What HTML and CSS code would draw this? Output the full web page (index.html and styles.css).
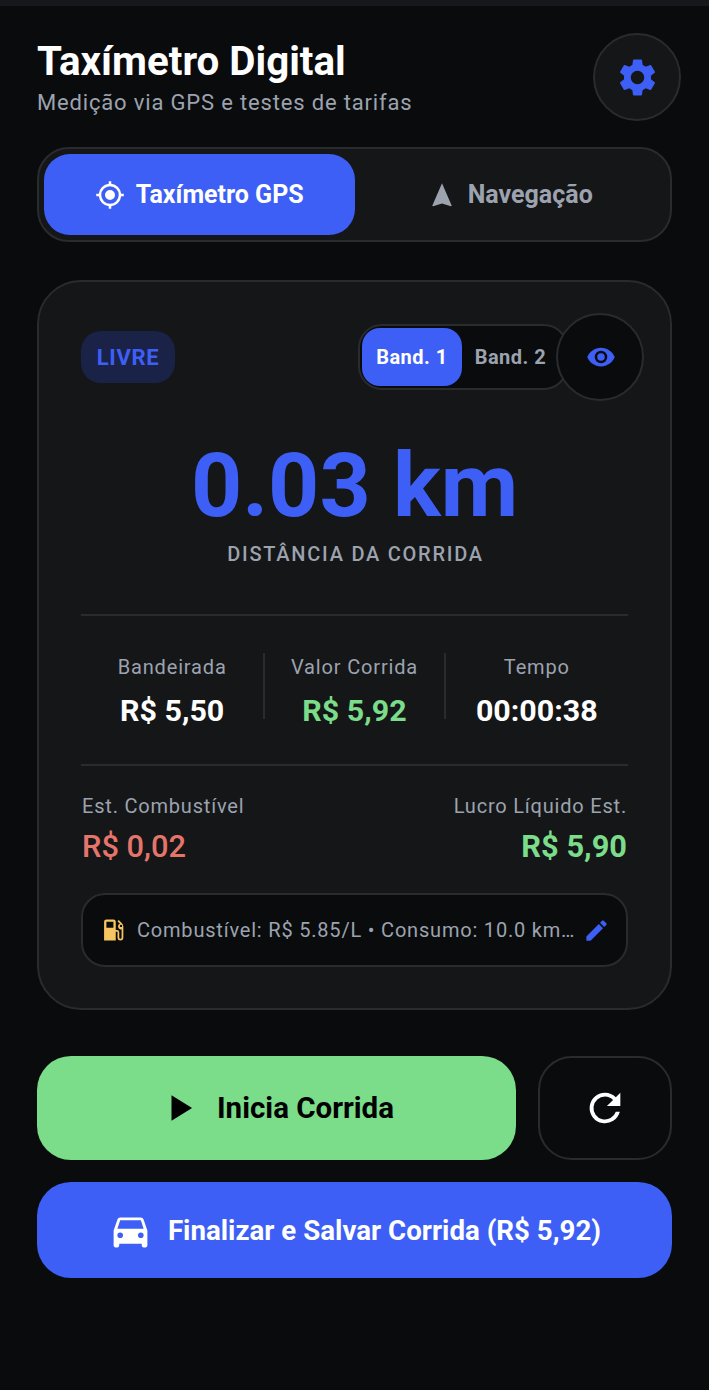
FILE: index.html
```html
<!DOCTYPE html>
<html lang="pt-BR">
<head>
<meta charset="utf-8">
<title>Taxímetro Digital</title>
<link rel="stylesheet" href="styles.css">
</head>
<body>
<div class="statusbar"></div>
<main class="page">
  <header class="header">
    <div class="header-text">
      <h1 class="title">Taxímetro Digital</h1>
      <p class="subtitle">Medição via GPS e testes de tarifas</p>
    </div>
    <button class="round-btn settings" aria-label="Configurações">
      <svg class="icon-gear" viewBox="0 0 24 24"><path fill="#3d5ff5" d="M19.14 12.94c.04-.3.06-.61.06-.94 0-.32-.02-.64-.07-.94l2.03-1.58a.49.49 0 0 0 .12-.61l-1.92-3.32a.49.49 0 0 0-.59-.22l-2.39.96c-.5-.38-1.03-.7-1.62-.94l-.36-2.54a.48.48 0 0 0-.48-.41h-3.84a.48.48 0 0 0-.47.41l-.36 2.54c-.59.24-1.13.57-1.62.94l-2.39-.96a.48.48 0 0 0-.59.22L2.74 8.87a.48.48 0 0 0 .12.61l2.03 1.58c-.05.3-.09.63-.09.94s.02.64.07.94l-2.03 1.58a.49.49 0 0 0-.12.61l1.92 3.32c.12.22.37.29.59.22l2.39-.96c.5.38 1.03.7 1.62.94l.36 2.54c.05.24.24.41.48.41h3.84c.24 0 .44-.17.47-.41l.36-2.54c.59-.24 1.13-.56 1.62-.94l2.39.96c.22.08.47 0 .59-.22l1.92-3.32a.48.48 0 0 0-.12-.61l-2.01-1.58zM12 15.6A3.6 3.6 0 1 1 12 8.4a3.6 3.6 0 0 1 0 7.2z"/></svg>
    </button>
  </header>

  <nav class="tabs">
    <button class="tab tab-active">
      <svg class="icon-tab" viewBox="0 0 24 24"><path fill="#fff" d="M12 8a4 4 0 1 0 0 8 4 4 0 0 0 0-8zm8.94 3A8.99 8.99 0 0 0 13 3.06V1h-2v2.06A8.99 8.99 0 0 0 3.06 11H1v2h2.06A8.99 8.99 0 0 0 11 20.94V23h2v-2.06A8.99 8.99 0 0 0 20.94 13H23v-2h-2.06zM12 19a7 7 0 1 1 0-14 7 7 0 0 1 0 14z"/></svg>
      <span>Taxímetro GPS</span>
    </button>
    <button class="tab">
      <svg class="icon-tab" viewBox="0 0 24 24"><path fill="#9ca3af" d="M12 2.5 4.2 20.6l.7.4 7.1-2.2 7.1 2.2.7-.4z"/></svg>
      <span>Navegação</span>
    </button>
  </nav>

  <section class="card">
    <div class="card-top">
      <span class="badge">LIVRE</span>
      <div class="top-controls">
        <div class="band-toggle">
          <span class="band band-active">Band. 1</span>
          <span class="band">Band. 2</span>
        </div>
        <button class="round-btn eye" aria-label="Ocultar">
          <svg class="icon-eye" viewBox="0 0 24 24"><path fill="#3d5ff5" d="M12 4.5C7 4.5 2.73 7.61 1 12c1.73 4.39 6 7.5 11 7.5s9.27-3.11 11-7.5c-1.73-4.39-6-7.5-11-7.5zM12 17a5 5 0 1 1 0-10 5 5 0 0 1 0 10zm0-8a3 3 0 1 0 0 6 3 3 0 0 0 0-6z"/></svg>
        </button>
      </div>
    </div>

    <div class="distance">
      <div class="distance-value">0.03 km</div>
      <div class="distance-label">DISTÂNCIA DA CORRIDA</div>
    </div>

    <div class="stats">
      <div class="stat">
        <div class="stat-label">Bandeirada</div>
        <div class="stat-value">R$ 5,50</div>
      </div>
      <div class="stat stat-mid">
        <div class="stat-label">Valor Corrida</div>
        <div class="stat-value green">R$ 5,92</div>
      </div>
      <div class="stat">
        <div class="stat-label">Tempo</div>
        <div class="stat-value">00:00:38</div>
      </div>
    </div>

    <div class="finance">
      <div>
        <div class="finance-label">Est. Combustível</div>
        <div class="finance-value red">R$ 0,02</div>
      </div>
      <div class="finance-right">
        <div class="finance-label">Lucro Líquido Est.</div>
        <div class="finance-value green">R$ 5,90</div>
      </div>
    </div>

    <div class="fuel">
      <svg class="icon-fuel" viewBox="0 0 24 24"><path fill="#f6c560" d="m19.77 7.23.01-.01-3.72-3.72L15 4.56l2.11 2.11A2.5 2.5 0 0 0 17.5 11.5c.35 0 .69-.07 1-.21v7.21a1 1 0 0 1-2 0V14a2 2 0 0 0-2-2h-1V5a2 2 0 0 0-2-2H5.5a2 2 0 0 0-2 2v16h10v-7.5H15v5a2.5 2.5 0 0 0 5 0V9c0-.69-.28-1.32-.73-1.77zM11.5 10h-6V5h6v5zm6.5-.5a1 1 0 1 1 0-2 1 1 0 0 1 0 2z"/></svg>
      <span class="fuel-text">Combustível: R$ 5.85/L • Consumo: 10.0 km…</span>
      <svg class="icon-pencil" viewBox="0 0 24 24"><path fill="#3d5ff5" d="M3 17.25V21h3.75L17.81 9.94l-3.75-3.75L3 17.25zM20.71 7.04a1 1 0 0 0 0-1.41l-2.34-2.34a1 1 0 0 0-1.41 0l-1.83 1.83 3.75 3.75 1.83-1.83z"/></svg>
    </div>
  </section>

  <div class="actions">
    <button class="btn-start">
      <svg class="icon-play" viewBox="0 0 24 24"><path fill="#000" d="M6 4v16l13-8z"/></svg>
      <span>Inicia Corrida</span>
    </button>
    <button class="btn-reset" aria-label="Reiniciar">
      <svg class="icon-reset" viewBox="0 0 24 24"><path fill="#fff" d="M17.65 6.35A7.96 7.96 0 0 0 12 4a8 8 0 1 0 7.73 10h-2.08A6 6 0 1 1 12 6c1.66 0 3.14.69 4.22 1.78L13 11h7V4l-2.35 2.35z"/></svg>
    </button>
  </div>

  <button class="btn-finish">
    <svg class="icon-car" viewBox="0 0 24 24"><path fill="#fff" d="M18.92 6.01C18.72 5.42 18.16 5 17.5 5h-11c-.66 0-1.21.42-1.42 1.01L3 12v8c0 .55.45 1 1 1h1c.55 0 1-.45 1-1v-1h12v1c0 .55.45 1 1 1h1c.55 0 1-.45 1-1v-8l-2.08-5.99zM6.5 16a1.5 1.5 0 1 1 0-3 1.5 1.5 0 0 1 0 3zm11 0a1.5 1.5 0 1 1 0-3 1.5 1.5 0 0 1 0 3zM5 11l1.5-4.5h11L19 11H5z"/></svg>
    <span>Finalizar e Salvar Corrida (R$ 5,92)</span>
  </button>
</main>
</body>
</html>
```

FILE: styles.css
```css
* { box-sizing: border-box; }
html, body { margin: 0; padding: 0; }
body {
  width: 709px;
  height: 1390px;
  overflow: hidden;
  background: #0a0b0d;
  font-family: Roboto, "Liberation Sans", sans-serif;
  color: #fff;
}
button { font-family: inherit; border: none; padding: 0; cursor: pointer; }
svg { display: block; flex: none; }
.icon-gear { width: 45px; height: 45px; }
.icon-tab { width: 30px; height: 30px; }
.icon-eye { width: 30px; height: 30px; margin-left: 2px; }
.icon-fuel { width: 28px; height: 28px; }
.icon-pencil { width: 27px; height: 27px; }
.icon-play { width: 38px; height: 38px; }
.icon-reset { width: 46px; height: 46px; }
.icon-car { width: 45px; height: 45px; }

.statusbar { height: 6px; background: #17181b; }
.page { padding: 27px 37px 0; display: flex; flex-direction: column; }

.header { display: flex; justify-content: space-between; align-items: center; height: 88px; margin-right: -9px; }
.title { margin: 0; font-size: 40.3px; line-height: 46px; font-weight: 700; color: #fff; }
.subtitle { margin: 5px 0 0; font-size: 22px; line-height: 26px; letter-spacing: 0.83px; color: #9ca3af; }
.round-btn {
  border-radius: 50%;
  border: 2px solid #2a2b2e;
  display: flex;
  align-items: center;
  justify-content: center;
}
.settings { width: 88px; height: 88px; background: #151618; }

.tabs {
  margin-top: 26px;
  height: 95px;
  border: 2px solid #2a2b2e;
  border-radius: 32px;
  background: #151618;
  padding: 5px;
  display: grid;
  grid-template-columns: 1fr 1fr;
}
.tab {
  background: transparent;
  color: #9ca3af;
  font-size: 25px;
  font-weight: 700;
  border-radius: 26px;
  display: flex;
  align-items: center;
  justify-content: center;
  gap: 11px;
}
.tab-active { background: #3d5ff5; color: #fff; }

.card {
  margin-top: 38px;
  height: 730px;
  border: 2px solid #2a2b2e;
  border-radius: 44px;
  background: #151618;
  padding: 31px 42px 0;
  display: flex;
  flex-direction: column;
}
.card-top { display: flex; justify-content: space-between; align-items: center; height: 88px; margin-right: -16px; }
.badge {
  width: 94px;
  height: 52px;
  border-radius: 20px;
  background: #1a2347;
  color: #3d5ff5;
  font-size: 22px;
  font-weight: 700;
  letter-spacing: 0.7px;
  display: flex;
  align-items: center;
  justify-content: center;
}
.top-controls { display: flex; align-items: center; }
.band-toggle {
  width: 210px;
  height: 66px;
  margin-right: -12px;
  border: 2px solid #2a2b2e;
  border-radius: 24px;
  background: #0a0b0d;
  padding: 2px;
  display: flex;
  align-items: stretch;
}
.band {
  width: 97px;
  color: #9ca3af;
  font-size: 20px;
  font-weight: 700;
  letter-spacing: 0.5px;
  border-radius: 18px;
  display: flex;
  align-items: center;
  justify-content: center;
}
.band-active { width: 100px; background: #3d5ff5; color: #fff; }
.eye { position: relative; width: 88px; height: 88px; background: #0a0b0d; }

.distance { text-align: center; margin-top: 33px; }
.distance-value { font-size: 89.4px; line-height: 104px; font-weight: 700; color: #3d5ff5; }
.distance-label { font-size: 20px; line-height: 24px; font-weight: 500; letter-spacing: 1.75px; color: #9ca3af; margin-top: 4px; padding-left: 2px; }

.stats {
  margin-top: 48px;
  height: 152px;
  padding-top: 37px;
  border-top: 2px solid #2a2b2e;
  border-bottom: 2px solid #2a2b2e;
  display: grid;
  grid-template-columns: 1fr 1fr 1fr;
  align-items: start;
}
.stat { text-align: center; height: 66px; padding-top: 2px; }
.stat-mid { border-left: 2px solid #2a2b2e; border-right: 2px solid #2a2b2e; }
.stat-label { font-size: 20px; line-height: 24px; letter-spacing: 0.85px; color: #9ca3af; }
.stat-value { margin-top: 14px; font-size: 30.4px; line-height: 36px; font-weight: 700; color: #fff; }
.green { color: #7bdc8a; }
.red { color: #e5756b; }

.finance { margin-top: 28px; padding: 0 1px; display: flex; justify-content: space-between; }
.finance-right { text-align: right; }
.finance-label { font-size: 20px; line-height: 24px; letter-spacing: 0.8px; color: #9ca3af; }
.finance-value { margin-top: 11px; font-size: 30.8px; line-height: 36px; font-weight: 700; }
.finance .red { font-weight: 500; }

.fuel {
  margin-top: 28px;
  height: 74px;
  border: 2px solid #2a2b2e;
  border-radius: 24px;
  background: #0a0b0d;
  padding: 0 16px 0 17px;
  display: flex;
  align-items: center;
  gap: 9px;
}
.fuel-text {
  flex: 1;
  min-width: 0;
  white-space: nowrap;
  font-size: 20px;
  letter-spacing: 0.8px;
  color: #9ca3af;
}

.actions { margin-top: 46px; display: flex; gap: 22px; height: 104px; }
.btn-start {
  flex: 1;
  background: #7bdc8a;
  color: #000;
  border-radius: 34px;
  font-size: 29.5px;
  font-weight: 700;
  padding-left: 3px;
  display: flex;
  align-items: center;
  justify-content: center;
  gap: 17px;
}
.btn-reset {
  width: 134px;
  background: #0a0b0d;
  border: 2px solid #2a2b2e;
  border-radius: 34px;
  display: flex;
  align-items: center;
  justify-content: center;
}
.btn-finish {
  margin-top: 22px;
  height: 96px;
  background: #3d5ff5;
  color: #fff;
  border-radius: 34px;
  font-size: 27.7px;
  font-weight: 700;
  display: flex;
  align-items: center;
  justify-content: center;
  gap: 15px;
}
```
